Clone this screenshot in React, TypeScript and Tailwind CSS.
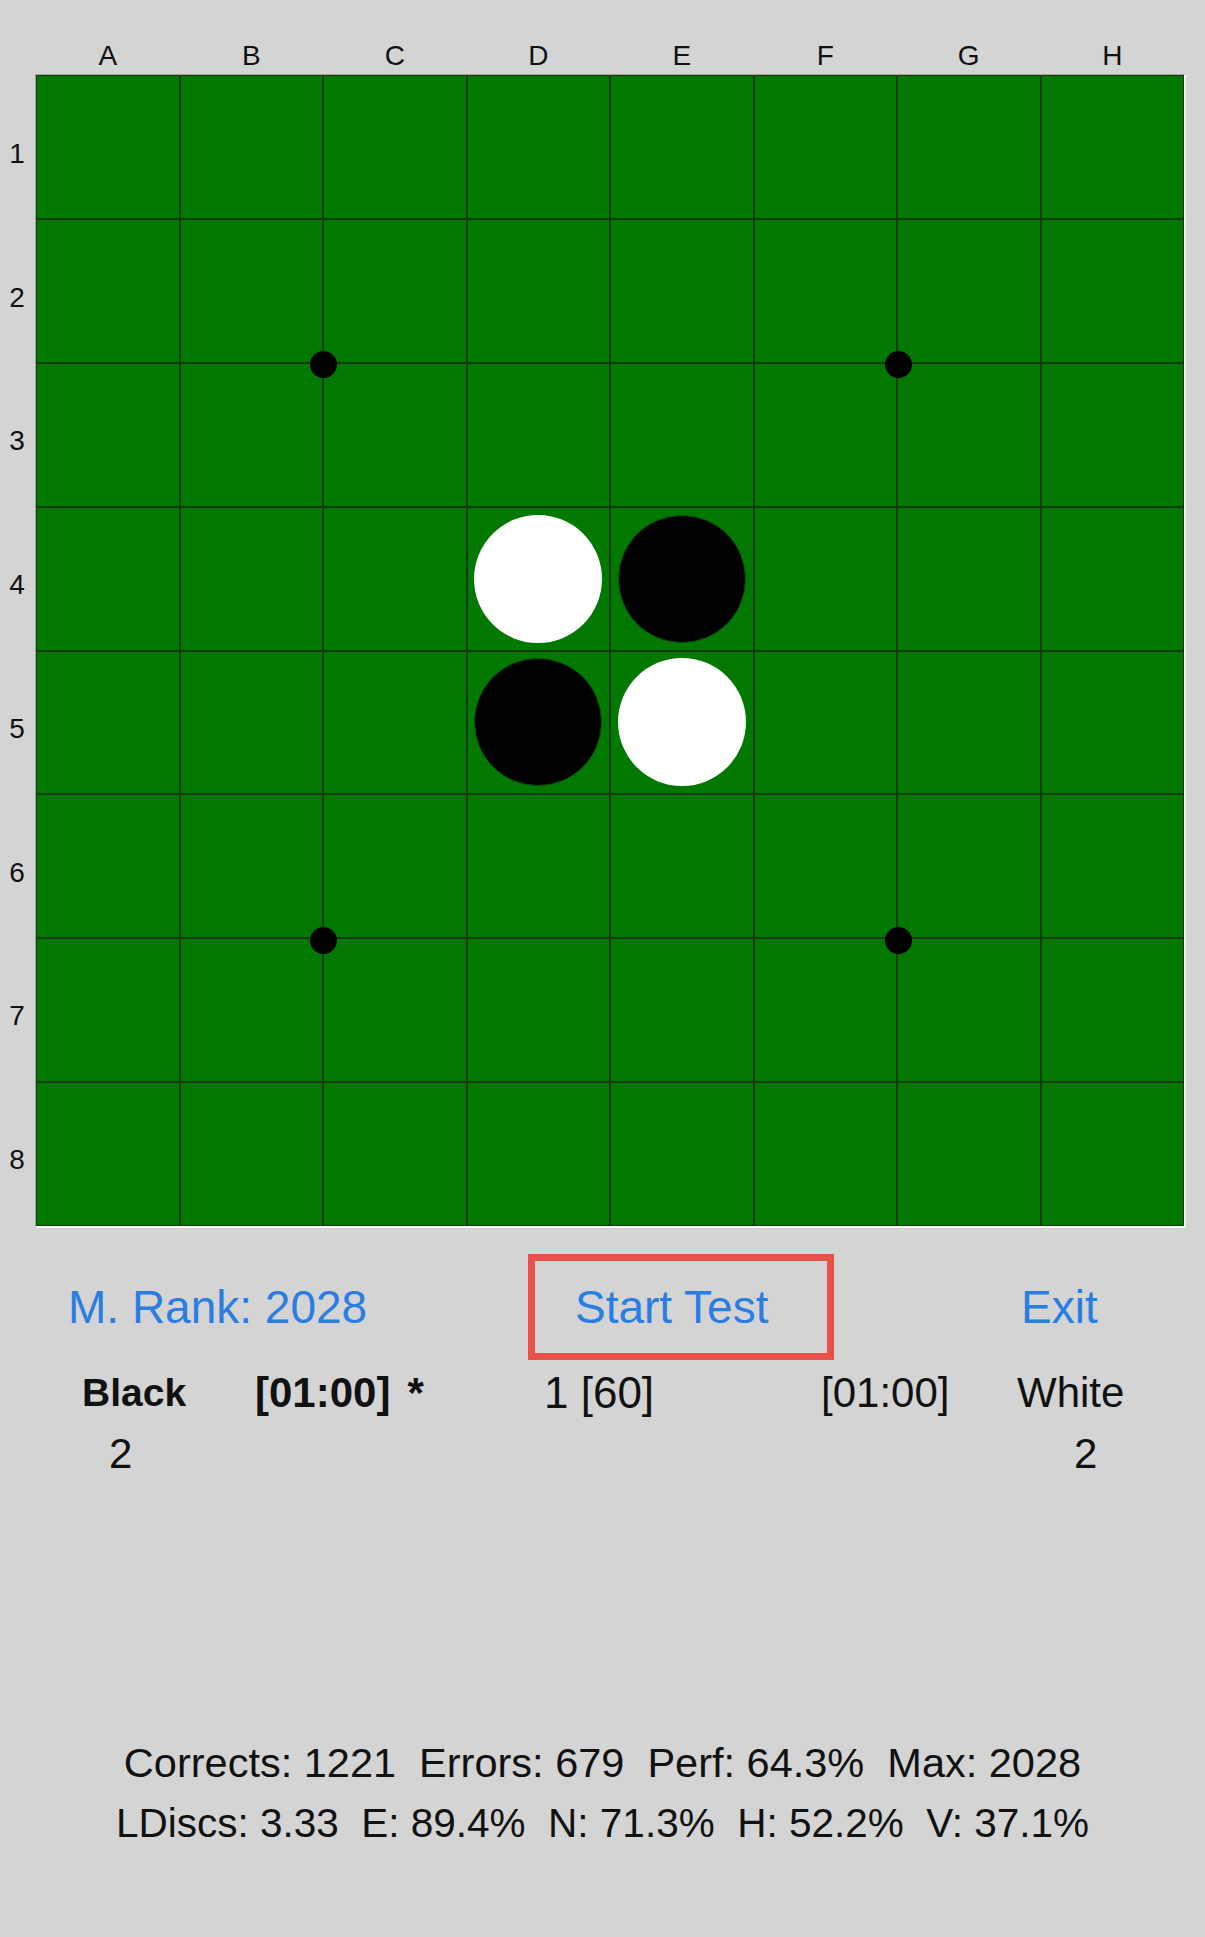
import React from "react";

const COLS = ["A", "B", "C", "D", "E", "F", "G", "H"];
const ROWS = [1, 2, 3, 4, 5, 6, 7, 8];

const discs: Record<string, "w" | "b"> = {
  "3-3": "w",
  "3-4": "b",
  "4-3": "b",
  "4-4": "w",
};

const dotPositions = [
  { left: 287, top: 289 },
  { left: 862, top: 289 },
  { left: 287, top: 865 },
  { left: 862, top: 865 },
];

export default function App() {
  return (
    <div
      className="w-[1205px] h-[1937px] bg-[#d4d4d4] text-[#111]"
      style={{ fontFamily: '"Liberation Sans", Arial, sans-serif' }}
    >
      {/* column labels */}
      <div className="flex h-[74px] items-end pl-[36px]">
        {COLS.map((c) => (
          <div key={c} className="w-[143.5px] text-center text-[28px] leading-[28px] pb-[4px]">
            {c}
          </div>
        ))}
      </div>

      <div className="flex">
        {/* row labels */}
        <div className="w-[35px] flex flex-col pt-[1px]">
          {ROWS.map((r) => (
            <div key={r} className="h-[143.75px] flex items-center justify-center text-[28px] leading-[28px] pr-[1px] pt-[14px]">
              {r}
            </div>
          ))}
        </div>

        {/* board */}
        <div className="relative border-t border-l border-t-[#a3a3a3] border-l-[#a3a3a3] border-b-2 border-r-2 border-b-[#f4f4f4] border-r-[#f4f4f4]">
          <div className="w-[1148px] h-[1151px] bg-[#133a13] p-[1px] grid grid-cols-8 grid-rows-8 gap-[2px]">
            {ROWS.map((_, ri) =>
              COLS.map((_, ci) => {
                const d = discs[`${ri}-${ci}`];
                return (
                  <div key={`${ri}-${ci}`} className="bg-[#017901] flex items-center justify-center">
                    {d === "w" && <div className="w-[128px] h-[128px] rounded-full bg-white" />}
                    {d === "b" && <div className="w-[128px] h-[128px] rounded-full bg-black border border-[#0d4d0d]" />}
                  </div>
                );
              })
            )}
          </div>
          {dotPositions.map((p, i) => (
            <div
              key={i}
              className="absolute w-[27px] h-[27px] rounded-full bg-black"
              style={{ left: p.left - 13.5, top: p.top - 13.5 }}
            />
          ))}
        </div>
      </div>

      {/* buttons row */}
      <div className="flex items-center mt-[26px] h-[106px] text-[#2a7de1] text-[46px] leading-[50px]">
        <div className="w-[528px] pl-[68px]">M. Rank: 2028</div>
        <div className="w-[306px] h-[106px] border-[7px] border-[#e8514a] flex items-center pl-[40px]">
          Start Test
        </div>
        <div className="pl-[187px]">Exit</div>
      </div>

      {/* player row */}
      <div className="flex mt-[8px] text-[42px] leading-[50px]">
        <div className="w-[255px] pl-[82px] font-bold text-[39px]">Black</div>
        <div className="w-[289px] font-bold whitespace-pre">
          [01:00]<span className="pl-[17px]">*</span>
        </div>
        <div className="w-[277px] whitespace-pre text-[44px]">1 [60]</div>
        <div className="w-[196px]">[01:00]</div>
        <div>White</div>
      </div>

      {/* counts row */}
      <div className="flex mt-[11px] text-[42px] leading-[50px]">
        <div className="w-[1074px] pl-[109px]">2</div>
        <div>2</div>
      </div>

      {/* stats */}
      <div className="mt-[253px] text-center leading-[61px] whitespace-pre">
        <div className="text-[41.5px]">Corrects: 1221  Errors: 679  Perf: 64.3%  Max: 2028</div>
        <div className="text-[40.5px]">LDiscs: 3.33  E: 89.4%  N: 71.3%  H: 52.2%  V: 37.1%</div>
      </div>
    </div>
  );
}
